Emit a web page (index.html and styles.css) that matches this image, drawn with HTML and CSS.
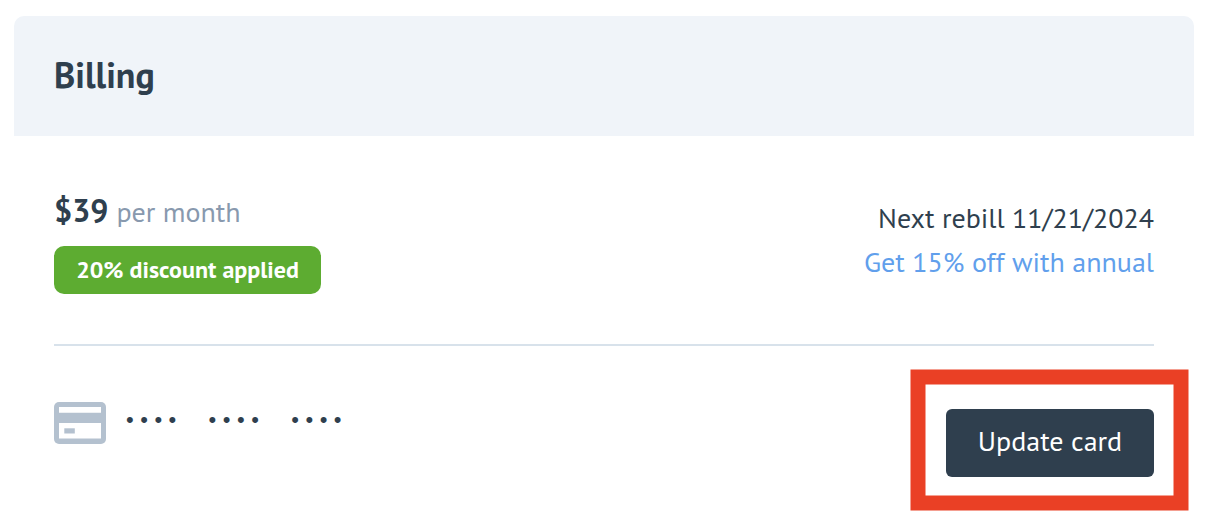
FILE: index.html
```html
<!doctype html>
<html lang="en">
  <head>
    <meta charset="UTF-8" />
    <meta name="viewport" content="width=device-width, initial-scale=1.0" />
    <title>Billing</title>
    <link rel="stylesheet" href="styles.css">
  </head>
  <body>
    <section class="card">
      <header class="card-header">
        <h1>Billing</h1>
      </header>

      <div class="card-body">
        <div class="plan">
          <div class="plan-info">
            <p class="price"><strong>$39</strong><span class="period">per month</span></p>
            <span class="badge">20% discount applied</span>
          </div>
          <div class="rebill">
            <p class="rebill-date">Next rebill 11/21/2024</p>
            <a href="#" class="annual-link">Get 15% off with annual</a>
          </div>
        </div>

        <div class="payment">
          <div class="card-number">
            <svg class="card-icon" width="52" height="42" viewBox="0 0 52 42">
              <rect width="52" height="42" rx="5" fill="#b4c1cf" />
              <path fill="#fff" d="M5 5h42v5.7H5zM5 21h42v15.6H5z" />
              <path fill="#b4c1cf" d="M10.3 26.3h10.5v5.2H10.3z" />
            </svg>
            <span class="dots">•••• •••• ••••</span>
          </div>
          <div class="highlight">
            <button type="button" class="update-btn">Update card</button>
          </div>
        </div>
      </div>
    </section>
  </body>
</html>
```
FILE: styles.css
```css
* {
  margin: 0;
  padding: 0;
  box-sizing: border-box;
}

body {
  font-family: 'PT Sans', 'Noto Sans', sans-serif;
  font-size: 28px;
  color: #2f3f4e;
  background: #fff;
  padding: 16px 22px 0 14px;
  min-height: 520px;
}

.card-header {
  height: 120px;
  display: flex;
  align-items: center;
  padding: 0 40px 2px;
  background: #f0f4f9;
  border-radius: 10px 10px 0 0;
}

h1 {
  font-size: 36px;
  line-height: 48px;
  font-weight: 700;
}

.card-body {
  padding: 0 40px;
}

.plan {
  display: flex;
  justify-content: space-between;
  height: 210px;
  padding-top: 52px;
  border-bottom: 2px solid #d8e2eb;
}

.price {
  display: flex;
  align-items: baseline;
  gap: 8px;
  height: 48px;
  line-height: 44px;
  margin-bottom: 10px;
}

.price strong {
  font-size: 32px;
}

.period {
  color: #8899ae;
}

.badge {
  display: flex;
  align-items: center;
  justify-content: center;
  width: 267px;
  height: 48px;
  padding-bottom: 2px;
  background: #5dac31;
  border-radius: 10px;
  color: #fff;
  font-size: 24px;
  font-weight: 700;
}

.rebill {
  padding-top: 8px;
  text-align: right;
  line-height: 44px;
}

.annual-link {
  color: #619fec;
  text-decoration: none;
}

.payment {
  display: flex;
  justify-content: space-between;
  padding-top: 56px;
}

.card-number {
  display: flex;
}

.dots {
  margin-left: 20px;
  font-family: 'Liberation Sans', sans-serif;
  font-size: 22px;
  line-height: 36px;
  letter-spacing: 6.5px;
  word-spacing: 13.2px;
}

.highlight {
  position: relative;
  padding-top: 7px;
}

/* red frame drawn around the button */
.highlight::after {
  content: '';
  position: absolute;
  top: -32px;
  left: -35px;
  width: 278px;
  height: 141px;
  border: 15px solid #ea4025;
  box-sizing: border-box;
  transform: translate(-0.5px, -0.5px);
  pointer-events: none;
}

.update-btn {
  display: block;
  width: 208px;
  height: 68px;
  padding-bottom: 6px;
  border: none;
  border-radius: 6px;
  background: #2f3f4e;
  color: #fff;
  font: inherit;
  cursor: pointer;
}
```
